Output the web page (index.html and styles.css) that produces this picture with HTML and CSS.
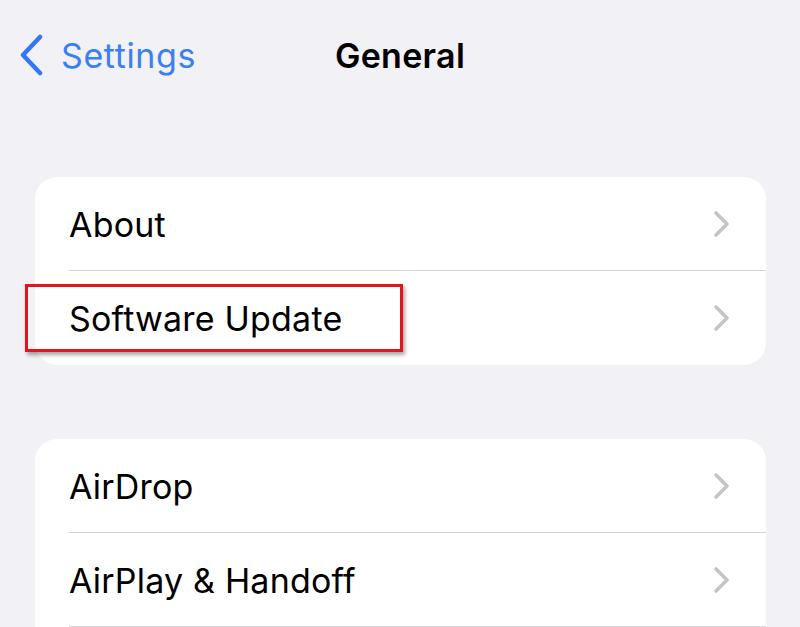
FILE: index.html
```html
<!DOCTYPE html>
<html>
<head>
<meta charset="utf-8">
<link rel="stylesheet" href="styles.css">
</head>
<body>
<div class="screen">
  <header class="nav">
    <div class="back">
      <svg class="back-icon" width="26" height="42" viewBox="0 0 26 42"><path d="M22 3 L5 21 L22 39" fill="none" stroke="#3478f6" stroke-width="4.5" stroke-linecap="round" stroke-linejoin="round"/></svg>
      <span class="back-label">Settings</span>
    </div>
    <div class="title">General</div>
  </header>

  <section class="group first">
    <div class="row"><span class="label">About</span><svg class="chev" width="18" height="28" viewBox="0 0 18 28"><path d="M3 3 L14 14 L3 25" fill="none" stroke="#c4c4c7" stroke-width="3.6" stroke-linecap="round" stroke-linejoin="round"/></svg></div>
    <div class="row highlighted"><span class="label">Software Update</span><svg class="chev" width="18" height="28" viewBox="0 0 18 28"><path d="M3 3 L14 14 L3 25" fill="none" stroke="#c4c4c7" stroke-width="3.6" stroke-linecap="round" stroke-linejoin="round"/></svg><div class="mark"></div></div>
  </section>

  <section class="group second">
    <div class="row"><span class="label">AirDrop</span><svg class="chev" width="18" height="28" viewBox="0 0 18 28"><path d="M3 3 L14 14 L3 25" fill="none" stroke="#c4c4c7" stroke-width="3.6" stroke-linecap="round" stroke-linejoin="round"/></svg></div>
    <div class="row"><span class="label">AirPlay &amp; Handoff</span><svg class="chev" width="18" height="28" viewBox="0 0 18 28"><path d="M3 3 L14 14 L3 25" fill="none" stroke="#c4c4c7" stroke-width="3.6" stroke-linecap="round" stroke-linejoin="round"/></svg></div>
    <div class="row"><span class="label">&nbsp;</span></div>
  </section>
</div>
</body>
</html>
```

FILE: styles.css
```css
html, body {
  margin: 0;
  padding: 0;
  background: #f1f1f6;
  overflow: hidden;
}
.screen {
  width: 800px;
  height: 627px;
  overflow: hidden;
  font-family: Inter, "Liberation Sans", sans-serif;
  color: #000;
}
.nav {
  position: relative;
  height: 112px;
  display: flex;
  align-items: flex-start;
}
.back {
  display: flex;
  align-items: center;
  padding: 34px 0 0 18px;
  gap: 17px;
}
.back-label {
  color: #3a80f2;
  font-size: 34px;
  letter-spacing: 0.6px;
}
.title {
  position: absolute;
  left: 0;
  right: 0;
  top: 35px;
  text-align: center;
  font-size: 34px;
  font-weight: 600;
  letter-spacing: 0.3px;
}
.group {
  margin: 0 34px 0 35px;
  background: #fff;
  border-radius: 22px;
}
.group.first { margin-top: 65px; }
.group.second { margin-top: 74px; }
.row {
  position: relative;
  height: 93px;
  margin-left: 34px;
  padding-right: 35px;
  display: flex;
  align-items: center;
  justify-content: space-between;
  border-bottom: 1px solid #d6d6da;
}
.group.first .row:last-child { border-bottom: none; height: 94px; }
.label {
  font-size: 34px;
  letter-spacing: 0.2px;
  padding-top: 1px;
}
.chev { display: block; }
.mark {
  position: absolute;
  left: -44px;
  top: 13px;
  width: 372px;
  height: 62px;
  border: 3px solid #e2141e;
  box-shadow: 2px 3px 4px rgba(0,0,0,0.35);
}
```
